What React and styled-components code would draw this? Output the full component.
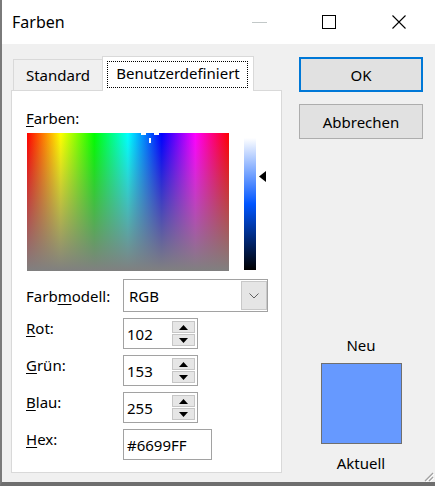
import React from "react";
import styled, { createGlobalStyle } from "styled-components";

const GlobalStyle = createGlobalStyle`
  html, body { margin: 0; padding: 0; background: #f0f0f0; }
  body { font-family: "Noto Sans", "Open Sans", sans-serif; }
`;

const Window = styled.div`
  position: relative;
  width: 435px;
  height: 486px;
  box-sizing: border-box;
  border-left: 2px solid #7a7a7a;
  border-bottom: 4px solid #6e6e6e;
  background: #f0f0f0;
  display: flex;
  flex-direction: column;
  font-family: "Noto Sans", sans-serif;
  font-size: 15px;
  line-height: 20px;
  color: #000;
`;

const TitleBar = styled.div`
  height: 44px;
  flex: none;
  background: #fff;
  display: flex;
  align-items: center;
`;

const Title = styled.div`
  padding-left: 10px;
  font-size: 16px;
`;

const Caption = styled.div`
  margin-left: auto;
  margin-right: 1px;
  display: flex;
  height: 100%;
`;

const CaptionButton = styled.div`
  width: 70px;
  height: 100%;
  display: flex;
  align-items: center;
  justify-content: center;
`;

const Body = styled.div`
  flex: 1;
  display: flex;
  padding: 12px 0 0 9px;
`;

const LeftCol = styled.div`
  width: 271px;
  display: flex;
  flex-direction: column;
`;

const Tabs = styled.div`
  height: 34px;
  display: flex;
  align-items: flex-end;
  padding-left: 2px;
`;

const Tab = styled.div`
  position: relative;
  box-sizing: border-box;
  width: ${(p) => (p.$active ? 152 : 89)}px;
  height: ${(p) => (p.$active ? 35 : 31)}px;
  margin-bottom: ${(p) => (p.$active ? -1 : 0)}px;
  z-index: ${(p) => (p.$active ? 1 : 0)};
  background: ${(p) => (p.$active ? "#fff" : "#f0f0f0")};
  border: 1px solid #d9d9d9;
  border-bottom: none;
  border-right: ${(p) => (p.$active ? "1px solid #d9d9d9" : "none")};
  display: flex;
  align-items: center;
  justify-content: center;
  padding-bottom: ${(p) => (p.$active ? 2 : 0)}px;
`;

const FocusRect = styled.div`
  position: absolute;
  left: 4px;
  top: 4px;
  right: 5px;
  bottom: 3px;
  border: 1px dotted #000;
`;

const Panel = styled.div`
  height: 383px;
  box-sizing: border-box;
  border: 1px solid #d9d9d9;
  background: #fff;
  padding: 17px 0 0 14px;
  display: flex;
  flex-direction: column;
`;

const Mn = styled.span`
  text-decoration: underline;
  text-underline-offset: 2px;
`;

const SpectrumRow = styled.div`
  margin-top: 5px;
  margin-left: 1px;
  display: flex;
  align-items: flex-start;
`;

const Spectrum = styled.div`
  position: relative;
  width: 202px;
  height: 138px;
  background:
    linear-gradient(to bottom, rgba(128, 128, 128, 0) 0%, rgba(128, 128, 128, 1) 100%),
    linear-gradient(to right, #ff0000 0%, #ffff00 16.67%, #00ff00 33.33%, #00ffff 50%, #0000ff 66.67%, #ff00ff 83.33%, #ff0000 100%);
`;

const Cross = styled.div`
  position: absolute;
  background: #fff;
  left: ${(p) => p.$x}px;
  top: ${(p) => p.$y}px;
  width: ${(p) => p.$w}px;
  height: ${(p) => p.$h}px;
`;

const LumWrap = styled.div`
  position: relative;
  margin-left: 15px;
  margin-top: 5px;
  width: 12px;
  height: 132px;
  background: linear-gradient(to bottom, #ffffff 0%, #0055ff 50%, #000000 100%);
`;

const LumArrow = styled.svg`
  position: absolute;
  left: 15px;
  top: 33px;
`;

const FormRow = styled.div`
  display: flex;
  align-items: ${(p) => (p.$center ? "center" : "flex-start")};
  margin-top: ${(p) => p.$gap}px;
`;

const Label = styled.div`
  width: 97px;
  flex: none;
`;

const Combo = styled.div`
  width: 145px;
  height: 33px;
  box-sizing: border-box;
  border: 1px solid #a2a2a2;
  background: #fff;
  display: flex;
  align-items: center;
  padding-left: 5px;
`;

const ComboButton = styled.div`
  margin-left: auto;
  width: 26px;
  height: 29px;
  box-sizing: border-box;
  border: 1px solid #c8c8c8;
  background: #e5e5e5;
  display: flex;
  align-items: center;
  justify-content: center;
`;

const Field = styled.div`
  width: ${(p) => p.$w}px;
  height: 31px;
  box-sizing: border-box;
  border: 1px solid #a2a2a2;
  background: #fff;
  display: flex;
  align-items: center;
  padding-left: 3px;
`;

const Spin = styled.div`
  margin-left: auto;
  margin-right: 2px;
  display: flex;
  flex-direction: column;
  gap: 1px;
`;

const SpinButton = styled.div`
  width: 23px;
  height: 12px;
  box-sizing: border-box;
  border: 1px solid #c6c6c6;
  background: #e6e6e6;
  display: flex;
  align-items: center;
  justify-content: center;
`;

const RightCol = styled.div`
  width: 124px;
  margin-left: 17px;
  display: flex;
  flex-direction: column;
  padding-bottom: 9px;
`;

const Button = styled.div`
  height: 35px;
  box-sizing: border-box;
  margin-top: ${(p) => p.$gap}px;
  background: #e1e1e1;
  border: ${(p) => (p.$default ? "2px solid #0078d7" : "1px solid #adadad")};
  display: flex;
  align-items: center;
  justify-content: center;
`;

const Preview = styled.div`
  margin-top: auto;
  display: flex;
  flex-direction: column;
  align-items: center;
`;

const Swatch = styled.div`
  width: 81px;
  height: 81px;
  box-sizing: border-box;
  margin: 8px 0 9px;
  border: 1px solid #6f6f6f;
  background: ${(p) => p.$color};
`;

const Grip = styled.svg`
  position: absolute;
  right: 1px;
  bottom: 0;
`;

const Tri = ({ up }) => (
  <svg width="9" height="5" viewBox="0 0 9 5">
    <path d={up ? "M0 5 L4.5 0 L9 5 Z" : "M0 0 L4.5 5 L9 0 Z"} fill="#000" />
  </svg>
);

const SpinField = ({ value }) => (
  <Field $w={75}>
    {value}
    <Spin>
      <SpinButton><Tri up /></SpinButton>
      <SpinButton><Tri /></SpinButton>
    </Spin>
  </Field>
);

export default function App() {
  return (
    <>
      <GlobalStyle />
      <Window>
        <TitleBar>
          <Title>Farben</Title>
          <Caption>
            <CaptionButton>
              <svg width="15" height="1"><rect width="15" height="1" fill="#c2c8c8" /></svg>
            </CaptionButton>
            <CaptionButton>
              <svg width="14" height="14"><rect x="0.5" y="0.5" width="13" height="13" fill="none" stroke="#000" /></svg>
            </CaptionButton>
            <CaptionButton>
              <svg width="14" height="14"><path d="M0.5 0.5 L13.5 13.5 M13.5 0.5 L0.5 13.5" stroke="#000" strokeWidth="1.1" /></svg>
            </CaptionButton>
          </Caption>
        </TitleBar>
        <Body>
          <LeftCol>
            <Tabs>
              <Tab>Standard</Tab>
              <Tab $active>
                <FocusRect />
                Benutzerdefiniert
              </Tab>
            </Tabs>
            <Panel>
              <div><Mn>F</Mn>arben:</div>
              <SpectrumRow>
                <Spectrum>
                  <Cross $x={114} $y={0} $w={5} $h={2} />
                  <Cross $x={127} $y={0} $w={5} $h={2} />
                  <Cross $x={122} $y={5} $w={2} $h={5} />
                </Spectrum>
                <LumWrap>
                  <LumArrow width="7" height="11" viewBox="0 0 7 11">
                    <path d="M0 5.5 L7 0 L7 11 Z" fill="#000" />
                  </LumArrow>
                </LumWrap>
              </SpectrumRow>
              <FormRow $center $gap={8}>
                <Label>Farb<Mn>m</Mn>odell:</Label>
                <Combo>
                  RGB
                  <ComboButton>
                    <svg width="10" height="6" viewBox="0 0 10 6">
                      <path d="M0.5 0.5 L5 5 L9.5 0.5" fill="none" stroke="#606060" />
                    </svg>
                  </ComboButton>
                </Combo>
              </FormRow>
              <FormRow $gap={6}>
                <Label><Mn>R</Mn>ot:</Label>
                <SpinField value="102" />
              </FormRow>
              <FormRow $gap={6}>
                <Label><Mn>G</Mn>rün:</Label>
                <SpinField value="153" />
              </FormRow>
              <FormRow $gap={6}>
                <Label><Mn>B</Mn>lau:</Label>
                <SpinField value="255" />
              </FormRow>
              <FormRow $gap={6}>
                <Label><Mn>H</Mn>ex:</Label>
                <Field $w={89}>#6699FF</Field>
              </FormRow>
            </Panel>
          </LeftCol>
          <RightCol>
            <Button $default $gap={1}>OK</Button>
            <Button $gap={12}>Abbrechen</Button>
            <Preview>
              <div>Neu</div>
              <Swatch $color="#6699ff" />
              <div>Aktuell</div>
            </Preview>
          </RightCol>
        </Body>
        <Grip width="12" height="12" viewBox="0 0 12 12">
          <path d="M11 3 L3 11 M11 7 L7 11" stroke="#a0a0a0" strokeWidth="1.2" />
          <path d="M12 4 L4 12 M12 8 L8 12" stroke="#fff" strokeWidth="1" />
        </Grip>
      </Window>
    </>
  );
}
